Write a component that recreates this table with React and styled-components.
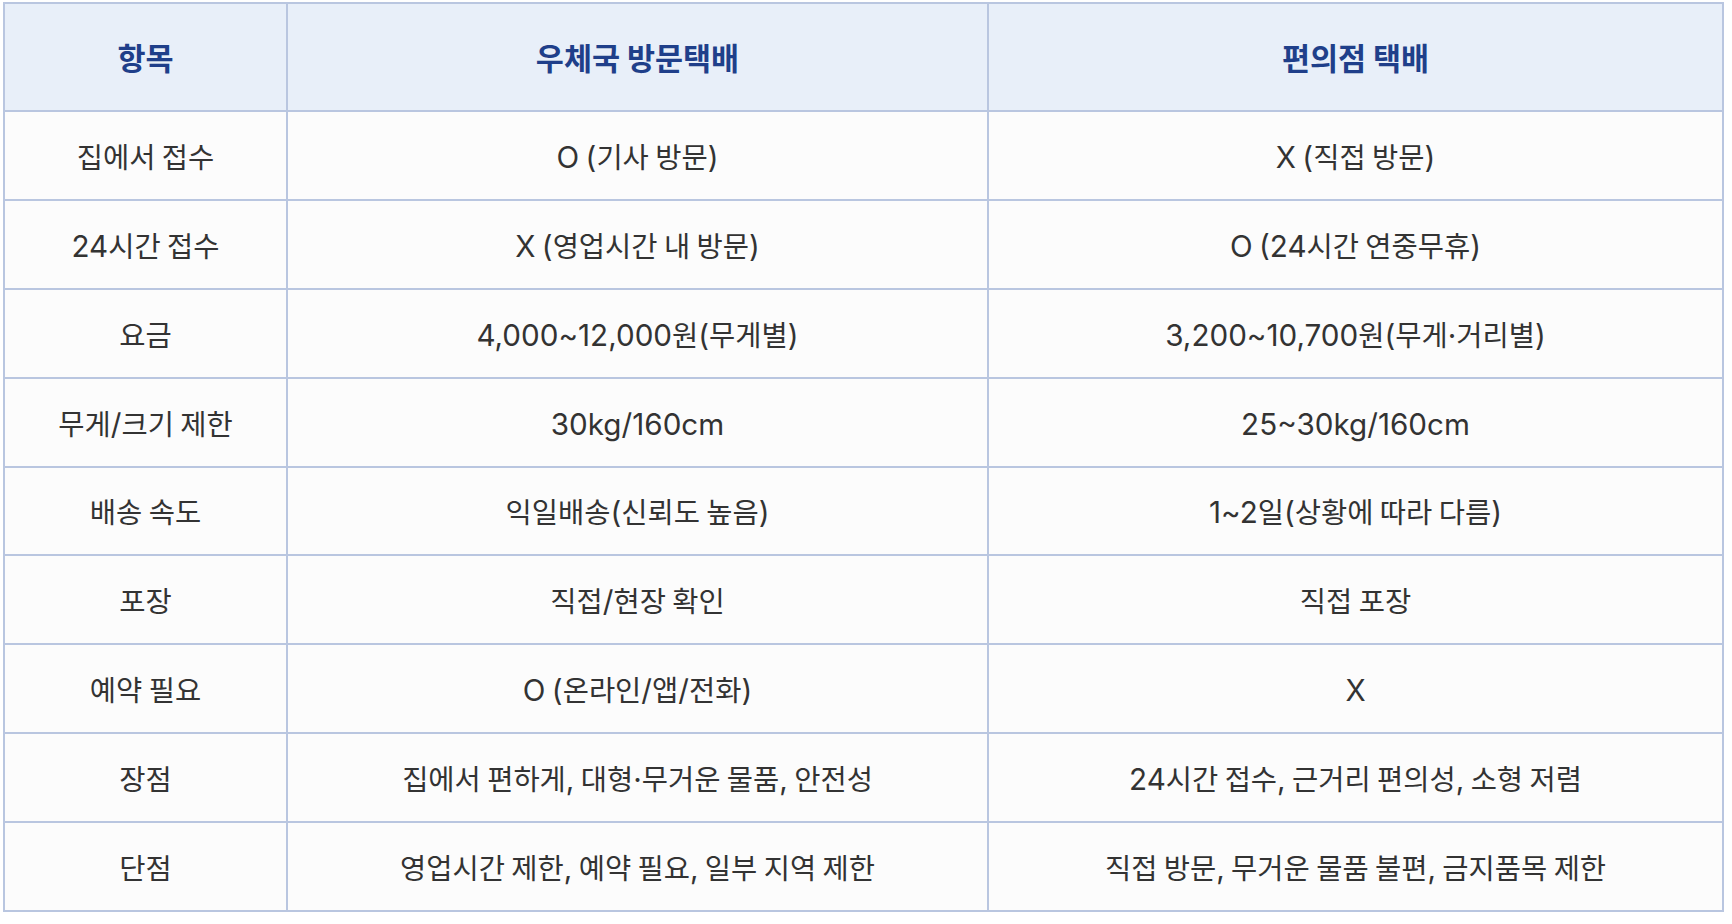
import React from "react";
import styled, { createGlobalStyle } from "styled-components";

const Global = createGlobalStyle`
  html, body { margin: 0; padding: 0; background: #ffffff; }
  body { font-family: "Noto Sans CJK KR", "Noto Sans", sans-serif; }
`;

const Page = styled.div`
  padding: 2px 0 0 3px;
`;

const Table = styled.table`
  width: 1719px;
  table-layout: fixed;
  border-collapse: separate;
  border-spacing: 0;
  border-top: 2px solid #b9c6e0;
  border-left: 2px solid #b9c6e0;
  box-sizing: border-box;
  font-family: "Noto Sans CJK KR", "Noto Sans", sans-serif;
`;

const Col = styled.col`
  width: ${(p) => p.$w}px;
`;

const HeadCell = styled.th`
  height: 106px;
  padding: 0 12px;
  background: #e8eff9;
  border-right: 2px solid #b9c6e0;
  border-bottom: 2px solid #b9c6e0;
  color: #1f3f8a;
  font-size: 30.5px;
  font-weight: 700;
  text-align: center;
  vertical-align: middle;
`;

const Cell = styled.td`
  height: 86.9px;
  padding: 0 8px;
  background: #fcfcfc;
  border-right: 2px solid #b9c6e0;
  border-bottom: 2px solid #b9c6e0;
  color: #333333;
  font-size: 28.5px;
  font-weight: 400;
  line-height: 1.3;
  text-align: center;
  vertical-align: middle;
  white-space: nowrap;
`;

const Latin = styled.span`
  font-family: "Inter", "Roboto", sans-serif;
  font-size: 1.04em;
  line-height: 1;
`;

const splitRuns = (text) =>
  text.split(/([0-9A-Za-z,~()/.·]+)/).map((part, i) =>
    i % 2 === 1 ? <Latin key={i}>{part}</Latin> : part
  );

const rows = [
  ["집에서 접수", "O (기사 방문)", "X (직접 방문)"],
  ["24시간 접수", "X (영업시간 내 방문)", "O (24시간 연중무휴)"],
  ["요금", "4,000~12,000원(무게별)", "3,200~10,700원(무게·거리별)"],
  ["무게/크기 제한", "30kg/160cm", "25~30kg/160cm"],
  ["배송 속도", "익일배송(신뢰도 높음)", "1~2일(상황에 따라 다름)"],
  ["포장", "직접/현장 확인", "직접 포장"],
  ["예약 필요", "O (온라인/앱/전화)", "X"],
  ["장점", "집에서 편하게, 대형·무거운 물품, 안전성", "24시간 접수, 근거리 편의성, 소형 저렴"],
  ["단점", "영업시간 제한, 예약 필요, 일부 지역 제한", "직접 방문, 무거운 물품 불편, 금지품목 제한"],
];

export default function App() {
  return (
    <>
      <Global />
      <Page>
        <Table>
          <colgroup>
            <Col $w={283} />
            <Col $w={701} />
            <Col $w={735} />
          </colgroup>
          <thead>
            <tr>
              <HeadCell>항목</HeadCell>
              <HeadCell>우체국 방문택배</HeadCell>
              <HeadCell>편의점 택배</HeadCell>
            </tr>
          </thead>
          <tbody>
            {rows.map((r, i) => (
              <tr key={i}>
                {r.map((c, j) => (
                  <Cell key={j}>{splitRuns(c)}</Cell>
                ))}
              </tr>
            ))}
          </tbody>
        </Table>
      </Page>
    </>
  );
}
